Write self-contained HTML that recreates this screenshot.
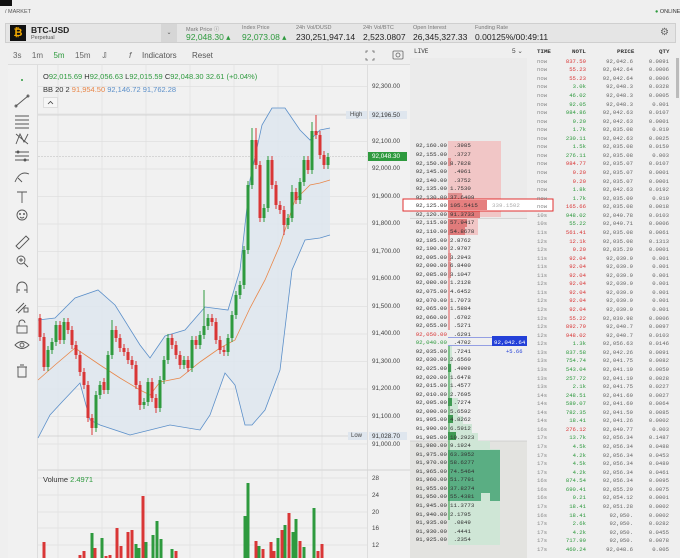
<!DOCTYPE html>
<html><head><meta charset="utf-8"><style>
*{margin:0;padding:0;box-sizing:border-box}
body{width:680px;height:558px;overflow:hidden;background:#efefef;font-family:"Liberation Sans",sans-serif;color:#222;position:relative}
.a{position:absolute;white-space:nowrap}
.mono{font-family:"Liberation Mono",monospace}
.g{color:#2e9a3e}.r{color:#d93636}.gr{color:#888}
.hl{font-size:5.5px;color:#777}
.hv{font-size:8.5px;top:32px}
.ob{position:absolute;left:410px;top:142.4px;width:117px;font-family:"Liberation Mono",monospace;font-size:5.8px;line-height:8.57px;color:#333}
.ob div{height:8.57px;position:relative}
.ob b{font-weight:normal;position:absolute;right:80px}
.ob i{font-style:normal;position:absolute;left:40px}
.tr{position:absolute;left:530px;top:57.7px;width:146px;font-family:"Liberation Mono",monospace;font-size:5.6px;line-height:8.57px}
.tr div{height:8.57px;position:relative}
.tr span{position:absolute}
.tr span:nth-child(1){left:7px;color:#888}
.tr span:nth-child(2){right:90px}
.tr span:nth-child(3){right:43px;color:#666}
.tr span:nth-child(4){right:7px;color:#666}
.ax{position:absolute;left:372px;font-size:6.3px;color:#444}
</style></head><body>
<div class="a" style="left:0;top:0;width:12px;height:6px;background:#111"></div>
<div class="a" style="left:5px;top:9px;font-size:5.5px;color:#555">/ MARKET</div>
<div class="a" style="left:655px;top:9px;font-size:5.5px;color:#333"><span style="color:#2e9a3e">●</span> ONLINE</div>

<div class="a" style="left:5px;top:23px;width:671px;height:20px;background:#e5e5e5;border:1px solid #cfcfcf"></div>
<div class="a" style="left:10px;top:25px;width:16px;height:16px;background:#111;color:#f2a900;font-size:11px;font-weight:bold;text-align:center;line-height:16px">₿</div>
<div class="a" style="left:31px;top:25px;font-size:8.5px;font-weight:bold">BTC-USD</div>
<div class="a" style="left:31px;top:35px;font-size:5.5px;color:#555">Perpetual</div>
<div class="a" style="left:161px;top:24px;width:16px;height:18px;background:#d6d6d6;font-size:6px;text-align:center;line-height:18px;color:#555">⌄</div>
<div class="a hl" style="left:186px;top:25px">Mark Price ⓘ</div>
<div class="a hv g" style="left:186px">92,048.30 ▴</div>
<div class="a hl" style="left:242px;top:25px">Index Price</div>
<div class="a hv g" style="left:242px">92,073.08 ▴</div>
<div class="a hl" style="left:296px;top:25px">24h Vol/DUSD</div>
<div class="a hv" style="left:296px">230,251,947.14</div>
<div class="a hl" style="left:363px;top:25px">24h Vol/BTC</div>
<div class="a hv" style="left:363px">2,523.0807</div>
<div class="a hl" style="left:413px;top:25px">Open Interest</div>
<div class="a hv" style="left:413px">26,345,327.33</div>
<div class="a hl" style="left:475px;top:25px">Funding Rate</div>
<div class="a hv" style="left:475px">0.00125%/00:49:11</div>
<div class="a" style="left:660px;top:27px;font-size:10px;color:#666">⚙</div>

<div class="a" style="left:13px;top:51px;font-size:8px;color:#666;word-spacing:3px">3s&nbsp; 1m&nbsp; <span class="g">5m</span>&nbsp; 15m&nbsp; <span style="font-size:6px">⌄</span></div>
<div class="a" style="left:104px;top:50px;font-size:8px;color:#666">⫾</div>
<div class="a" style="left:129px;top:50px;font-size:8.5px;color:#666;font-style:italic">f</div>
<div class="a" style="left:142px;top:51px;font-size:8px;color:#555">Indicators</div>
<div class="a" style="left:192px;top:51px;font-size:8px;color:#555">Reset</div>

<svg class="a" style="left:0;top:0" width="680" height="558" viewBox="0 0 680 558">
<rect x="8" y="64" width="402" height="494" fill="#f1f1f1"/>
<line x1="37.5" y1="64" x2="37.5" y2="558" stroke="#ddd"/>
<line x1="367.5" y1="64" x2="367.5" y2="558" stroke="#ddd"/>
<line x1="8" y1="64.5" x2="410" y2="64.5" stroke="#ddd"/>
<g stroke="#e0e0e0" stroke-width="0.7">
<path d="M38 86.6H367M38 114H367M38 141.5H367M38 169H367M38 196.5H367M38 224H367M38 251.5H367M38 279H367M38 306.5H367M38 334H367M38 361.5H367M38 389H367M38 416.5H367M38 444H367M38 478H367M38 495H367M38 512H367M38 528H367M38 545H367"/>
<path d="M58 64V558M102 64V558M146 64V558M190 64V558M234 64V558M278 64V558M322 64V558"/>
</g>
<line x1="38" y1="470" x2="410" y2="470" stroke="#d4d4d4"/>
<line x1="38" y1="115" x2="367" y2="115" stroke="#ccc" stroke-width="0.7"/>
<line x1="38" y1="156.5" x2="367" y2="156.5" stroke="#bbb" stroke-width="0.5" stroke-dasharray="2 1"/>
<line x1="38" y1="436" x2="367" y2="436" stroke="#ccc" stroke-width="0.7"/>
<!-- BB fill -->
<path d="M38 320 L55 318 L75 298 L98 290 L115 305 L140 345 L150 358 L165 336 L185 330 L205 307 L228 310 L240 270 L250 180 L262 125 L272 108 L285 108 L300 130 L310 140 L320 130 L330 128 L330 235 L320 238 L305 240 L292 270 L280 370 L265 410 L252 425 L245 425 L235 385 L225 373 L210 415 L200 430 L170 425 L150 430 L130 435 L100 425 L90 420 L80 383 L62 402 L50 415 L38 438 Z" fill="#dde6ef" opacity="0.8"/>
<path d="M38 320 L55 318 L75 298 L98 290 L115 305 L140 345 L150 358 L165 336 L185 330 L205 307 L228 310 L240 270 L250 180 L262 125 L272 108 L285 108 L300 130 L310 140 L320 130 L330 128" fill="none" stroke="#5b8fc9" stroke-width="0.8"/>
<path d="M38 438 L50 415 L62 402 L80 383 L90 420 L100 425 L130 435 L150 430 L170 425 L200 430 L210 415 L225 373 L235 385 L245 425 L252 425 L265 410 L280 370 L292 270 L305 240 L320 238 L330 235" fill="none" stroke="#5b8fc9" stroke-width="0.8"/>
<path d="M38 380 L55 365 L75 348 L100 365 L120 378 L140 390 L150 395 L160 382 L180 378 L200 362 L220 348 L235 340 L250 308 L265 280 L280 245 L295 200 L310 185 L320 183 L330 180" fill="none" stroke="#e8874a" stroke-width="0.8"/>
<!-- candles -->
<path stroke="#2e9a3e" stroke-width="1" d="M48 346V371M52 338V354M56 321V346M64 318V344M96 391V432M100 381V399M108 351V394M112 320V359M144 398V409M148 378V406M160 376V412M164 356V384M168 334V364M184 356V369M192 336V372M200 331V349M204 290V339M208 314V330M228 334V356M232 311V342M236 291V319M240 281V299M244 246V289M248 181V254M252 128V189M264 204V222M268 156V212M288 214V229M292 185V222M300 178V204M304 156V186M312 122V174M328 153V169"/>
<path stroke="#2e9a3e" stroke-width="3" d="M48 350V367M52 342V350M56 325V342M64 322V340M96 395V428M100 385V395M108 355V390M112 330V355M144 402V405M148 382V402M160 380V408M164 360V380M168 338V360M184 360V365M192 340V368M200 335V345M204 326V335M208 318V326M228 338V352M232 315V338M236 295V315M240 285V295M244 250V285M248 185V250M252 140V185M264 208V218M268 160V208M288 218V225M292 192V218M300 182V200M304 160V182M312 131V170M328 157V165"/>
<path stroke="#d93636" stroke-width="1" d="M40 314V341M44 333V371M60 321V344M68 318V334M72 326V349M76 341V359M80 351V376M84 368V389M88 381V422M92 414V435M104 378V394M116 326V342M120 334V352M124 344V356M128 348V364M132 356V369M136 361V389M140 381V410M152 378V402M156 394V413M172 334V349M176 341V359M180 351V369M188 356V372M196 336V349M212 314V326M216 318V344M220 336V354M224 346V356M256 128V169M260 161V222M272 156V189M276 181V209M280 201V214M284 206V235M296 188V204M308 156V174M316 115V139M320 131V159M324 151V169"/>
<path stroke="#d93636" stroke-width="3" d="M40 318V337M44 337V367M60 325V340M68 322V330M72 330V345M76 345V355M80 355V372M84 372V385M88 385V418M92 418V428M104 382V390M116 330V338M120 338V348M124 348V352M128 352V360M132 360V365M136 365V385M140 385V405M152 382V398M156 398V408M172 338V345M176 345V355M180 355V365M188 360V368M196 340V345M212 318V322M216 322V340M220 340V350M224 350V352M256 140V165M260 165V218M272 160V185M276 185V205M280 205V210M284 210V225M296 192V200M308 160V170M316 131V135M320 135V155M324 155V165"/>
<!-- volume -->
<path stroke="#d93636" stroke-width="3" d="M44 542V558M80 555V558M84 551V558M95 548V558M106 556V558M110 555V558M117 528V558M121 546V558M128 532V558M132 530V558M143 496V558M176 551V558M256 541V558M263 549V558M271 542V558M274 551V558M282 530V558M289 513V558M300 541V558M318 551V558M322 544V558"/>
<path stroke="#2e9a3e" stroke-width="3" d="M92 533V558M102 538V558M136 544V558M139 548V558M146 542V558M153 535V558M157 521V558M161 539V558M172 549V558M245 516V558M248 483V558M259 546V558M278 538V558M285 525V558M293 532V558M296 519V558M304 547V558M314 508V558"/>
<!-- left tools -->
<g fill="none" stroke="#555" stroke-width="0.9">
<circle cx="22" cy="80" r="1" fill="#2e9a3e" stroke="none"/>
<path d="M16 106L28 96"/><circle cx="16" cy="106" r="1"/><circle cx="28" cy="96" r="1"/>
<path d="M15 116H29M15 120H29M15 124H29M15 128H29"/>
<path d="M16 144L20 134L24 142L28 134M16 134L28 144"/>
<path d="M15 152H29M15 156H29M15 160H29"/><circle cx="18" cy="152" r="1"/><circle cx="25" cy="160" r="1"/>
<path d="M15 182Q20 170 29 174M18 178L22 182"/>
<path d="M17 192H27M22 192V203"/>
<circle cx="22" cy="215" r="5"/><circle cx="20" cy="214" r="0.5"/><circle cx="24" cy="214" r="0.5"/><path d="M20 217Q22 219 24 217"/>
<path d="M16 246L26 236L29 239L19 249Z"/>
<circle cx="21" cy="260" r="4"/><path d="M24 263L28 267M19 260H23M21 258V262"/>
<path d="M17 293V287A5 5 0 0 1 27 287V293M17 290H20M24 290H27"/>
<path d="M16 311L24 303M18 313L26 305"/><rect x="24" y="308" width="4" height="4"/>
<rect x="17" y="326" width="10" height="7"/><path d="M19 326V323A3 3 0 0 1 25 323"/>
<path d="M15 345Q22 338 29 345Q22 352 15 345Z"/><circle cx="22" cy="345" r="2"/>
<path d="M17 367H27M18 367V377H26V367M20 365H24"/>
</g>
<!-- legend button -->
<rect x="43.5" y="97.5" width="14" height="10" fill="#f6f6f6" stroke="#ddd"/>
<path d="M48 104L50.5 101.5L53 104" fill="none" stroke="#444" stroke-width="0.8"/>
<!-- top icons -->
<path d="M366 53V51H368M372 51H374V53M374 58V60H372M368 60H366V58" fill="none" stroke="#666" stroke-width="0.8"/>
<rect x="393" y="51" width="10" height="8" rx="1" fill="none" stroke="#666" stroke-width="0.8"/><circle cx="398" cy="55" r="2" fill="none" stroke="#666" stroke-width="0.8"/>
<!-- price tags -->
<rect x="346" y="111" width="21" height="8" fill="#dfe6ee"/>
<rect x="369" y="111" width="38" height="8" fill="#dfe6ee"/>
<rect x="368" y="152" width="39" height="9" fill="#2e9a3e"/>
<rect x="348" y="432" width="19" height="8" fill="#dfe6ee"/>
<rect x="369" y="432" width="38" height="8" fill="#dfe6ee"/>
<!-- orderbook panel -->
<rect x="410" y="58" width="117" height="160" fill="#ebebeb"/>
<rect x="410" y="441" width="117" height="117" fill="#e3e3e0"/>
<line x1="410" y1="218.5" x2="527" y2="218.5" stroke="#bbb" stroke-width="0.6"/>
<line x1="410" y1="441" x2="527" y2="441" stroke="#bbb" stroke-width="0.6"/>
<path d="M448 141H501V217H478V235H448Z" fill="#f1c6c6"/>
<rect x="448" y="193" width="14" height="8" fill="#e08f8f"/>
<rect x="448" y="210" width="32" height="8" fill="#e07b7b"/>
<rect x="448" y="219" width="19" height="8" fill="#e07b7b"/>
<rect x="448" y="227" width="17" height="8" fill="#e07b7b"/>
<rect x="448" y="158" width="3" height="8" fill="#e08f8f"/>
<path d="M449 235V330" stroke="#e05555" stroke-width="1"/>
<rect x="448" y="253" width="3" height="8" fill="#e08f8f"/><rect x="448" y="262" width="3" height="8" fill="#e08f8f"/><rect x="448" y="270" width="3" height="8" fill="#e08f8f"/>
<path d="M448 346H452V398H458V416H463V424H472V433H478V441H490V449H500V545H448Z" fill="#cfe6d6"/>
<rect x="448" y="450" width="52" height="51" fill="#5aae83"/>
<rect x="481" y="493" width="9" height="8" fill="#cfe6d6"/>
<path d="M449 346V520" stroke="#2e9a3e" stroke-width="1"/>
<rect x="448" y="364" width="3" height="8" fill="#3f9a52"/><rect x="448" y="398" width="4" height="8" fill="#3f9a52"/><rect x="448" y="415" width="5" height="8" fill="#3f9a52"/><rect x="448" y="432" width="8" height="8" fill="#3f9a52"/>
<path d="M448 337.5H492M448 345.5H492" stroke="#3a50d8" stroke-width="0.6"/>
<rect x="492" y="336" width="35" height="10" fill="#2340d8"/>
<rect x="403" y="199" width="150" height="12" fill="#fff" stroke="#e03030" stroke-width="1"/>
<rect x="448" y="200" width="39" height="10" fill="#e57f7f"/>
<rect x="676" y="58" width="3" height="40" fill="#bbb"/>
</svg>

<div class="a" style="left:43px;top:72px;font-size:7.5px;color:#333">O<span class="g">92,015.69</span> H<span class="g">92,056.63</span> L<span class="g">92,015.59</span> C<span class="g">92,048.30</span> <span class="g">32.61 (+0.04%)</span></div>
<div class="a" style="left:43px;top:85px;font-size:7.5px;color:#333">BB 20 2 <span style="color:#e8874a">91,954.50</span> <span style="color:#5b8fc9">92,146.72</span> <span style="color:#5b8fc9">91,762.28</span></div>
<div class="a" style="left:43px;top:475px;font-size:7.5px;color:#333">Volume <span class="g">2.4971</span></div>

<div class="ax" style="top:83px">92,300.00</div>
<div class="ax" style="top:138px">92,100.00</div>
<div class="ax" style="top:165px">92,000.00</div>
<div class="ax" style="top:193px">91,900.00</div>
<div class="ax" style="top:220px">91,800.00</div>
<div class="ax" style="top:248px">91,700.00</div>
<div class="ax" style="top:275px">91,600.00</div>
<div class="ax" style="top:303px">91,500.00</div>
<div class="ax" style="top:330px">91,400.00</div>
<div class="ax" style="top:358px">91,300.00</div>
<div class="ax" style="top:385px">91,200.00</div>
<div class="ax" style="top:413px">91,100.00</div>
<div class="ax" style="top:441px">91,000.00</div>
<div class="ax" style="top:112px;color:#333">92,196.50</div>
<div class="a" style="left:350px;top:112px;font-size:6px;color:#444">High</div>
<div class="ax" style="top:153px;color:#fff">92,048.30</div>
<div class="ax" style="top:432.5px;color:#333">91,028.70</div>
<div class="a" style="left:351px;top:433px;font-size:6px;color:#444">Low</div>
<div class="ax" style="top:475px">28</div>
<div class="ax" style="top:492px">24</div>
<div class="ax" style="top:509px">20</div>
<div class="ax" style="top:525px">16</div>
<div class="ax" style="top:542px">12</div>

<div class="a mono" style="left:414px;top:48px;font-size:6px;color:#333">LIVE</div>
<div class="a" style="left:512px;top:47px;font-size:6.5px;color:#444">5 ⌄</div>
<div class="a mono" style="left:537px;top:48px;font-size:5.8px;font-weight:bold;color:#333">TIME</div>
<div class="a mono" style="left:572px;top:48px;font-size:5.8px;font-weight:bold;color:#333">NOTL</div>
<div class="a mono" style="left:617px;top:48px;font-size:5.8px;font-weight:bold;color:#333">PRICE</div>
<div class="a mono" style="left:659px;top:48px;font-size:5.8px;font-weight:bold;color:#333">QTY</div>

<div class="ob">
<div><b>92,160.00</b><i>&nbsp;.3985</i></div>
<div><b>92,155.00</b><i>&nbsp;.3727</i></div>
<div><b>92,150.00</b><i>8.7828</i></div>
<div><b>92,145.00</b><i>&nbsp;.4961</i></div>
<div><b>92,140.00</b><i>&nbsp;.3752</i></div>
<div><b>92,135.00</b><i>1.7530</i></div>
<div><b>92,130.00</b><i>37.6409</i></div>
<div><b>92,125.00</b><i>105.5415</i><i style="left:82px;color:#aaa">339.1502</i></div>
<div><b>92,120.00</b><i>91.3733</i></div>
<div><b>92,115.00</b><i>57.9417</i></div>
<div><b>92,110.00</b><i>54.8678</i></div>
<div><b>92,105.00</b><i>2.8762</i></div>
<div><b>92,100.00</b><i>2.9707</i></div>
<div><b>92,095.00</b><i>3.2943</i></div>
<div><b>92,090.00</b><i>6.8400</i></div>
<div><b>92,085.00</b><i>3.1047</i></div>
<div><b>92,080.00</b><i>1.2128</i></div>
<div><b>92,075.00</b><i>4.6452</i></div>
<div><b>92,070.00</b><i>1.7073</i></div>
<div><b>92,065.00</b><i>1.5884</i></div>
<div><b>92,060.00</b><i>&nbsp;.6702</i></div>
<div><b>92,055.00</b><i>&nbsp;.5271</i></div>
<div><b class="r">92,050.00</b><i>&nbsp;.6291</i></div>
<div><b class="g">92,040.00</b><i>&nbsp;.4702</i><i style="left:84px;color:#fff">92,042.64</i></div>
<div><b>92,035.00</b><i>&nbsp;.7241</i><i style="left:96px;color:#2340d8;font-size:5.5px">+5.66</i></div>
<div><b>92,030.00</b><i>2.6560</i></div>
<div><b>92,025.00</b><i>&nbsp;.4909</i></div>
<div><b>92,020.00</b><i>1.6478</i></div>
<div><b>92,015.00</b><i>1.4577</i></div>
<div><b>92,010.00</b><i>2.7695</i></div>
<div><b>92,005.00</b><i>&nbsp;.7274</i></div>
<div><b>92,000.00</b><i>5.6592</i></div>
<div><b>91,995.00</b><i>4.8262</i></div>
<div><b>91,990.00</b><i>6.5912</i></div>
<div><b>91,985.00</b><i>10.2923</i></div>
<div><b>91,980.00</b><i>9.1924</i></div>
<div><b>91,975.00</b><i>63.3952</i></div>
<div><b>91,970.00</b><i>58.6277</i></div>
<div><b>91,965.00</b><i>74.5464</i></div>
<div><b>91,960.00</b><i>51.7791</i></div>
<div><b>91,955.00</b><i>37.8274</i></div>
<div><b>91,950.00</b><i>55.4381</i></div>
<div><b>91,945.00</b><i>11.3773</i></div>
<div><b>91,940.00</b><i>2.1795</i></div>
<div><b>91,935.00</b><i>&nbsp;.0849</i></div>
<div><b>91,930.00</b><i>&nbsp;.4441</i></div>
<div><b>91,925.00</b><i>&nbsp;.2354</i></div>
</div>

<div class="tr">
<div><span>now</span><span class="r">837.59</span><span>92,042.6</span><span>0.0091</span></div>
<div><span>now</span><span class="r">55.23</span><span>92,042.64</span><span>0.0006</span></div>
<div><span>now</span><span class="r">55.23</span><span>92,042.64</span><span>0.0006</span></div>
<div><span>now</span><span class="g">3.0k</span><span>92,048.3</span><span>0.0328</span></div>
<div><span>now</span><span class="g">46.02</span><span>92,048.3</span><span>0.0005</span></div>
<div><span>now</span><span class="g">92.05</span><span>92,048.3</span><span>0.001</span></div>
<div><span>now</span><span class="g">984.86</span><span>92,042.63</span><span>0.0107</span></div>
<div><span>now</span><span class="g">9.20</span><span>92,042.63</span><span>0.0001</span></div>
<div><span>now</span><span class="g">1.7k</span><span>92,035.08</span><span>0.019</span></div>
<div><span>now</span><span class="g">230.11</span><span>92,042.63</span><span>0.0025</span></div>
<div><span>now</span><span class="g">1.5k</span><span>92,035.08</span><span>0.0159</span></div>
<div><span>now</span><span class="g">276.11</span><span>92,035.08</span><span>0.003</span></div>
<div><span>now</span><span class="r">984.77</span><span>92,035.07</span><span>0.0107</span></div>
<div><span>now</span><span class="r">9.20</span><span>92,035.07</span><span>0.0001</span></div>
<div><span>now</span><span class="r">9.20</span><span>92,035.07</span><span>0.0001</span></div>
<div><span>now</span><span class="g">1.8k</span><span>92,042.63</span><span>0.0192</span></div>
<div><span>now</span><span class="g">1.7k</span><span>92,035.09</span><span>0.019</span></div>
<div><span>now</span><span class="r">165.66</span><span>92,035.08</span><span>0.0018</span></div>
<div><span>10s</span><span class="g">948.02</span><span>92,040.78</span><span>0.0103</span></div>
<div><span>10s</span><span class="g">55.22</span><span>92,040.71</span><span>0.0006</span></div>
<div><span>11s</span><span class="r">561.41</span><span>92,035.08</span><span>0.0061</span></div>
<div><span>12s</span><span class="r">12.1k</span><span>92,035.08</span><span>0.1313</span></div>
<div><span>12s</span><span class="r">9.20</span><span>92,035.29</span><span>0.0001</span></div>
<div><span>11s</span><span class="r">92.04</span><span>92,039.9</span><span>0.001</span></div>
<div><span>11s</span><span class="r">92.04</span><span>92,039.9</span><span>0.001</span></div>
<div><span>11s</span><span class="r">92.04</span><span>92,039.9</span><span>0.001</span></div>
<div><span>12s</span><span class="r">92.04</span><span>92,039.9</span><span>0.001</span></div>
<div><span>11s</span><span class="r">92.04</span><span>92,039.9</span><span>0.001</span></div>
<div><span>12s</span><span class="r">92.04</span><span>92,039.9</span><span>0.001</span></div>
<div><span>12s</span><span class="r">92.04</span><span>92,039.9</span><span>0.001</span></div>
<div><span>12s</span><span class="r">55.22</span><span>92,039.98</span><span>0.0006</span></div>
<div><span>12s</span><span class="r">892.79</span><span>92,040.7</span><span>0.0097</span></div>
<div><span>12s</span><span class="r">948.02</span><span>92,040.7</span><span>0.0103</span></div>
<div><span>12s</span><span class="g">1.3k</span><span>92,056.63</span><span>0.0146</span></div>
<div><span>13s</span><span class="g">837.58</span><span>92,042.26</span><span>0.0091</span></div>
<div><span>13s</span><span class="g">754.74</span><span>92,041.75</span><span>0.0082</span></div>
<div><span>13s</span><span class="g">543.04</span><span>92,041.19</span><span>0.0059</span></div>
<div><span>13s</span><span class="g">257.72</span><span>92,041.19</span><span>0.0028</span></div>
<div><span>13s</span><span class="g">2.1k</span><span>92,041.75</span><span>0.0227</span></div>
<div><span>14s</span><span class="g">248.51</span><span>92,041.69</span><span>0.0027</span></div>
<div><span>14s</span><span class="g">589.07</span><span>92,041.69</span><span>0.0064</span></div>
<div><span>14s</span><span class="g">782.35</span><span>92,041.59</span><span>0.0085</span></div>
<div><span>14s</span><span class="g">18.41</span><span>92,041.26</span><span>0.0002</span></div>
<div><span>16s</span><span class="r">276.12</span><span>92,040.77</span><span>0.003</span></div>
<div><span>17s</span><span class="g">13.7k</span><span>92,056.34</span><span>0.1487</span></div>
<div><span>17s</span><span class="g">4.5k</span><span>92,056.34</span><span>0.0488</span></div>
<div><span>17s</span><span class="g">4.2k</span><span>92,056.34</span><span>0.0453</span></div>
<div><span>17s</span><span class="g">4.5k</span><span>92,056.34</span><span>0.0489</span></div>
<div><span>17s</span><span class="g">4.2k</span><span>92,056.34</span><span>0.0461</span></div>
<div><span>16s</span><span class="g">874.54</span><span>92,056.34</span><span>0.0095</span></div>
<div><span>16s</span><span class="g">690.41</span><span>92,055.29</span><span>0.0075</span></div>
<div><span>16s</span><span class="g">9.21</span><span>92,054.12</span><span>0.0001</span></div>
<div><span>17s</span><span class="g">18.41</span><span>92,051.28</span><span>0.0002</span></div>
<div><span>16s</span><span class="g">18.41</span><span>92,050.</span><span>0.0002</span></div>
<div><span>17s</span><span class="g">2.6k</span><span>92,050.</span><span>0.0282</span></div>
<div><span>17s</span><span class="g">4.2k</span><span>92,050.</span><span>0.0455</span></div>
<div><span>17s</span><span class="g">717.99</span><span>92,050.</span><span>0.0078</span></div>
<div><span>17s</span><span class="g">460.24</span><span>92,048.6</span><span>0.005</span></div>
</div>
</body></html>
